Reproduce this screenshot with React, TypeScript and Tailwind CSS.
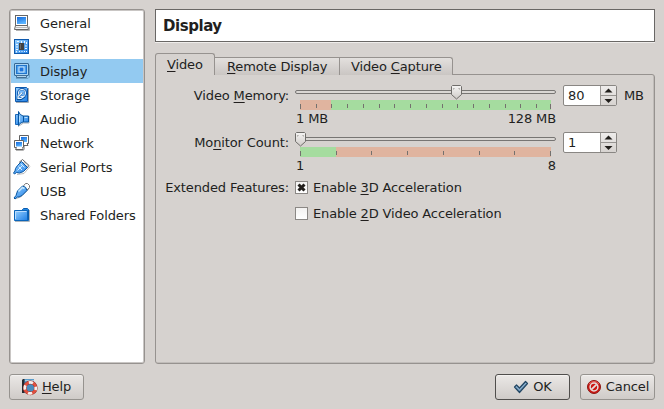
import type { ReactNode } from 'react';

function Gradients() {
  return (
    <svg width="0" height="0" className="absolute" aria-hidden="true">
      <defs>
        <linearGradient id="blue" x1="0" y1="0" x2="1" y2="1">
          <stop offset="0" stopColor="#9ad2ff" />
          <stop offset="1" stopColor="#1f7fe6" />
        </linearGradient>
        <linearGradient id="screen" x1="0" y1="0" x2="0.4" y2="1">
          <stop offset="0" stopColor="#1268dc" />
          <stop offset="1" stopColor="#5ab4ff" />
        </linearGradient>
        <linearGradient id="thumb" x1="0" y1="0" x2="0" y2="1">
          <stop offset="0" stopColor="#f6f5f4" />
          <stop offset="1" stopColor="#cfcbc8" />
        </linearGradient>
      </defs>
    </svg>
  );
}

function Svg({ children }: { children: ReactNode }) {
  return (
    <svg width="16" height="16" viewBox="0 0 16 16" fill="none" className="shrink-0 overflow-visible">
      {children}
    </svg>
  );
}

const GeneralIcon = () => (
  <Svg>
    <path d="M2 15.5h13.500v-4" stroke="#b5b5b5" />
    <rect x="1.500" y="0.500" width="12" height="10" fill="#fff" stroke="#666" />
    <rect x="3" y="2" width="9" height="7" fill="url(#screen)" />
    <path d="M1.500 10.500h12l1 4H.5z" fill="#f4f4f4" stroke="#666" />
    <path d="M2 12.500h11" stroke="#bbb" />
  </Svg>
);

const SystemIcon = () => (
  <Svg>
    <rect x="0.5" y="0.5" width="14" height="14" fill="url(#blue)" stroke="#0e59ad" />
    <path d="M3 2.500h2M7.500 2v2M10.500 2v2M12.500 3v2M2 5.500h2M2 8h2M2 10.500h2M5.500 12v1M8 12v1M10.500 12v1M11 7h2M11 9.500h2M2.500 12v1.500M12 12.500h1" stroke="#eef7ff" />
    <rect x="5" y="4" width="5" height="7" fill="#424242" />
    <path d="M6.500 5v5" stroke="#696969" />
  </Svg>
);

const DisplayIcon = () => (
  <Svg>
    <path d="M2 15.500h12l1.500-1.500V2" stroke="#6da2c7" />
    <rect x="0.5" y="0.5" width="14" height="12" rx="0.5" fill="#a9d4f2" stroke="#356895" />
    <rect x="2.500" y="2.500" width="10" height="8" fill="#4da0ed" stroke="#2275cb" />
    <rect x="5" y="4" width="5" height="5" fill="#1f76dc" stroke="#d5ecfb" />
    <path d="M2.500 12.500v2h10v-2z" fill="#b3d6ee" stroke="#416f96" />
  </Svg>
);

const StorageIcon = () => (
  <Svg>
    <path d="M2 15.500h12.500V1" stroke="#a4abb2" />
    <path d="M1.500.5h11l1 1v13h-12z" fill="url(#blue)" stroke="#0e59ad" />
    <circle cx="8" cy="6" r="3.900" fill="#76bafa" stroke="#0d54a8" strokeWidth="2.200" />
    <circle cx="8" cy="6" r="3.700" stroke="#e3f3ff" />
    <path d="M9 5.500 3.500 10v2.500H7l4-3" stroke="#064f9b" strokeWidth="1.600" />
    <path d="M8.500 5.500 4 9.500v2h3l3.500-2.500" stroke="#edf7ff" strokeWidth="1.200" />
  </Svg>
);

const AudioIcon = () => (
  <Svg>
    <path d="M4 15.500 9.500 12h5.500V5" stroke="#a9afb5" />
    <path d="M1.500 3.500h3v10h-3z" fill="url(#blue)" stroke="#1c69b8" />
    <path d="M4.500.5q1 3.500 4.500 4.500h5.500v6H9q-3.500 1-4.500 3.500z" fill="url(#blue)" stroke="#07549f" />
    <path d="M9.500 5v6" stroke="#07549f" />
    <path d="M10.500 6.500h3M5.500 5v6" stroke="#b5dfff" />
  </Svg>
);

const NetworkIcon = () => (
  <Svg>
    <path d="M5.500.5h9v8h-1.500l1 2h-7V8.500H5.500z" fill="#fff" stroke="#626262" />
    <path d="M7 2h6v5H7z" fill="url(#screen)" />
    <path d="M.5 5.500h9v7H8.500l1 2h-8l1-2h-2z" fill="#fff" stroke="#626262" />
    <path d="M2 7h6v4.500H2z" fill="url(#screen)" />
    <path d="M10.500 11v3L9.500 15.500H2" stroke="#b6b6b6" />
  </Svg>
);

const SerialIcon = () => (
  <Svg>
    <path d="m3 15.500 7-1 6-7" stroke="#bbb" />
    <path d="M5 3.500 8.500.5l6.500 6-3 3.500" fill="#fff" stroke="#606060" />
    <path d="m1.500 9.500 2-3 4-4 6 6-4 4-4 1.500-3-.500-2 1.500-1-1 1.500-2z" fill="url(#blue)" stroke="#0855a2" />
    <path d="M4.500 7.500 8 11M7 5l3.500 3.500M3.500 11.500 8 7" stroke="#daf0ff" />
    <path d="m9.500 3 3.500 3.500" stroke="#777" strokeDasharray="1 1" />
  </Svg>
);

const UsbIcon = () => (
  <Svg>
    <path d="m2.500 15.500 5-2 8-8" stroke="#bbb" />
    <path d="m9 3.500 2.500-3h2l2 2v2L12.500 7.500" fill="#fff" stroke="#777" />
    <path d="m3.500 8 5-5q4 .5 4.500 4.500l-5 5-3 1.500H3.500l-2.500 2-1-1 2-2.500z" fill="url(#blue)" stroke="#07559f" />
    <path d="m4.500 8.500 4-4 2 1" stroke="#c8e9ff" strokeWidth="1.500" />
  </Svg>
);

const FolderIcon = () => (
  <Svg>
    <path d="M1 14.500h14.500V3" stroke="#adb6be" />
    <path d="M8.500 3.500v-1l1-1h4l1 1v11h-2" fill="#2387e2" stroke="#0b5caf" />
    <path d="M.5 3.500h13v10H.5z" fill="url(#blue)" stroke="#0b65ba" />
    <path d="M1.500 12V4.500h11" stroke="#baddff" />
  </Svg>
);

const HelpIcon = () => (
  <Svg>
    <path d="M0 1 1 0h2v14H0z" fill="#252a30" />
    <path d="M2.500 0H12v14H2.500z" fill="#5a9cca" />
    <path d="M3 1.500h9" stroke="#a8cce2" />
    <circle cx="8.300" cy="8.900" r="5.500" fill="#4a8cbd" stroke="#8e302a" strokeWidth="3.600" />
    <circle cx="8.300" cy="8.900" r="5.500" stroke="#e2503f" strokeWidth="2.700" />
    <circle cx="8.300" cy="8.900" r="5.500" stroke="#f5efed" strokeWidth="2.700" strokeDasharray="4.320 4.320" strokeDashoffset="2.160" />
  </Svg>
);

const OkIcon = () => (
  <Svg>
    <path d="m1.500 8 2-2 3 3 6-6.500 2 2-8 9z" fill="#6f97ba" stroke="#244763" strokeWidth="1.200" strokeLinejoin="round" />
    <path d="m3 7.500 3.500 3.300L13 4" stroke="#91b4d1" />
  </Svg>
);

const CancelIcon = () => (
  <Svg>
    <circle cx="8" cy="8" r="6.500" fill="#cc1712" stroke="#8c1713" />
    <path d="M3 5q5-5 10 0" stroke="#ed6862" />
    <circle cx="8" cy="8" r="3.900" stroke="#e4dfdc" strokeWidth="1.500" />
    <path d="m5.300 10.700 5.400-5.400" stroke="#e4dfdc" strokeWidth="1.800" />
  </Svg>
);

const pages: [string, () => ReactNode][] = [
  ['General', GeneralIcon],
  ['System', SystemIcon],
  ['Display', DisplayIcon],
  ['Storage', StorageIcon],
  ['Audio', AudioIcon],
  ['Network', NetworkIcon],
  ['Serial Ports', SerialIcon],
  ['USB', UsbIcon],
  ['Shared Folders', FolderIcon],
];

/* Mnemonic letter of a label */
const U = ({ children }: { children: string }) => (
  <span className="underline decoration-1 underline-offset-2 [text-decoration-skip-ink:none]">{children}</span>
);

interface SliderProps {
  ticks: number[];
  split: number;
  value: number;
  from: string;
  to: string;
  low: string;
  high: string;
}

const memoryTicks = [0, 16, 31, 47, 63, 79, 94, 110, 126, 142, 157, 173, 189, 205, 220, 236, 250];
const monitorTicks = [0, 36, 71, 107, 143, 179, 214, 250];

function Slider({ ticks, split, value, from, to, low, high }: SliderProps) {
  return (
    <div className="relative flex w-[261px] flex-col pt-[5px]">
      <div className="h-1 rounded-xs border border-[#777573] bg-[#dad7d4]" />
      <svg width="251" height="10" className="mt-[6px] ml-[5px]" shapeRendering="crispEdges">
        <rect width={split} height="10" fill={low} />
        <rect x={split} width={251 - split} height="10" fill={high} />
        {ticks.map((x) => (
          <rect key={x} x={x} y="4" width="1" height={x === 0 || x === 250 ? 5 : 4} fill="#74716e" />
        ))}
      </svg>
      <div className="flex justify-between pt-px pl-px leading-[15px]">
        <span>{from}</span>
        <span>{to}</span>
      </div>
      <svg width="12" height="15" viewBox="0 0 12 15" className="absolute top-0" style={{ left: value }}>
        <path d="M1.500.5h8l1 1v8l-5 4.500-5-4.500v-8z" fill="url(#thumb)" stroke="#6f6d6a" />
        <path d="M2.500 4.500v-1h1M7.500 3.500h1v1" stroke="#a3a09c" fill="none" />
      </svg>
    </div>
  );
}

function Spin({ value }: { value: string }) {
  return (
    <div className="flex h-[21px] w-[54px] overflow-hidden rounded-[2px] border border-[#898683] bg-white">
      <span className="w-[37px] border-r border-[#9b9895] pl-1 leading-[19px]">{value}</span>
      <div className="flex flex-1 flex-col bg-linear-to-b from-[#eeeceb] to-[#d7d3d0]">
        <svg width="15" height="9"><path d="M3.500 6.500h8L7.500 2.500z" fill="#211e1b" /></svg>
        <div className="h-px bg-[#979491]" />
        <svg width="15" height="9"><path d="M3.500 3h8L7.500 7z" fill="#211e1b" /></svg>
      </div>
    </div>
  );
}

function Check({ on, children }: { on?: boolean; children: ReactNode }) {
  return (
    <div className="flex h-[13px] items-center">
      <span className="mr-[5px] size-[13px] shrink-0 border border-[#8b8885] bg-linear-to-b from-[#f3f2f1] to-white">
        {on && (
          <svg width="11" height="11">
            <path d="m2.500 2.500 6 6m0-6-6 6" stroke="#211e1b" strokeWidth="3" />
          </svg>
        )}
      </span>
      <span>{children}</span>
    </div>
  );
}

function Button({ icon, primary, children }: { icon: ReactNode; primary?: boolean; children: ReactNode }) {
  return (
    <button
      className={
        'flex h-[26px] w-[75px] items-center justify-center gap-1 rounded-[3px] border bg-linear-to-b from-[#ebe8e6] to-[#cfcbc8] leading-4 tracking-[-0.12px] shadow-[inset_0_1px_0_#f3f1f0] ' +
        (primary ? 'border-[#504e4c]' : 'border-[#96938f]')
      }
    >
      {icon}
      <span>{children}</span>
    </button>
  );
}

export default function App() {
  return (
    <div className="flex h-[409px] w-[664px] flex-col overflow-hidden bg-[#d6d2cf] p-[9px] font-['DejaVu_Sans',sans-serif] text-[13px] tracking-[-0.13px] whitespace-nowrap text-[#221f1e]">
      <Gradients />
      <div className="flex h-[355px] gap-[10px]">
        <nav className="w-[136px] shrink-0 rounded-[3px] border border-[#96928f] bg-white pt-px shadow-[inset_0_0_0_1px_#c9c6c4]">
          {pages.map(([name, Icon]) => (
            <div
              key={name}
              className={'mx-px flex h-6 items-center gap-[10px] pl-[3px] ' + (name === 'Display' ? 'bg-[#93caf1]' : '')}
            >
              <Icon />
              <span className="pt-[2px] leading-[22px] tracking-[-0.08px]">{name}</span>
            </div>
          ))}
        </nav>
        <main className="flex w-[500px] flex-col">
          <h1 className="h-[33px] border border-[#696765] bg-white pl-[7px] text-[15px] leading-[32px] font-bold tracking-[-0.45px] shadow-[0_1px_0_#efedeb]">
            Display
          </h1>
          <div className="z-10 mt-[11px] flex h-[22px] items-end">
            <div className="h-[22px] w-[60px] rounded-t-[3px] border border-b-0 border-[#96928f] bg-[#d6d2cf] pl-[11px] leading-[22px]">
              <U>V</U>ideo
            </div>
            <div className="h-[18px] w-[125px] border-t border-r border-[#96928f] bg-linear-to-b from-[#e3e0de] to-[#cac6c3] pl-3 leading-[18px]">
              <U>R</U>emote Display
            </div>
            <div className="h-[18px] w-[113px] rounded-tr-[3px] border-t border-r border-[#96928f] bg-linear-to-b from-[#e3e0de] to-[#cac6c3] pl-[11px] leading-[18px]">
              Video <U>C</U>apture
            </div>
          </div>
          <section className="-mt-px flex flex-1 flex-col rounded-[3px] rounded-tl-none border border-[#96928f] pt-[10px] shadow-[inset_-1px_-1px_0_#c0bcb9]">
            <div className="flex h-[47px]">
              <div className="mr-[6px] w-[133px] text-right leading-[22px]">Video <U>M</U>emory:</div>
              <Slider ticks={memoryTicks} split={31} value={156} from="1 MB" to="128 MB" low="#e0b49f" high="#a5dc9f" />
              <div className="w-[7px]" />
              <Spin value="80" />
              <span className="pl-[7px] leading-[22px]">MB</span>
            </div>
            <div className="flex h-[47px]">
              <div className="mr-[6px] w-[133px] text-right leading-[22px]">Mo<U>n</U>itor Count:</div>
              <Slider ticks={monitorTicks} split={36} value={0} from="1" to="8" low="#a5dc9f" high="#e0b49f" />
              <div className="w-[7px]" />
              <Spin value="1" />
            </div>
            <div className="flex pt-[2px]">
              <div className="mr-[6px] w-[133px] text-right leading-[13px]">Extended Features:</div>
              <div className="flex flex-col gap-[13px]">
                <Check on>Enable <U>3</U>D Acceleration</Check>
                <Check>Enable <U>2</U>D Video Acceleration</Check>
              </div>
            </div>
          </section>
        </main>
      </div>
      <footer className="mt-[10px] flex gap-[10px]">
        <Button icon={<HelpIcon />}><U>H</U>elp</Button>
        <div className="w-[391px]" />
        <Button icon={<OkIcon />} primary>OK</Button>
        <Button icon={<CancelIcon />}>Cancel</Button>
      </footer>
    </div>
  );
}
